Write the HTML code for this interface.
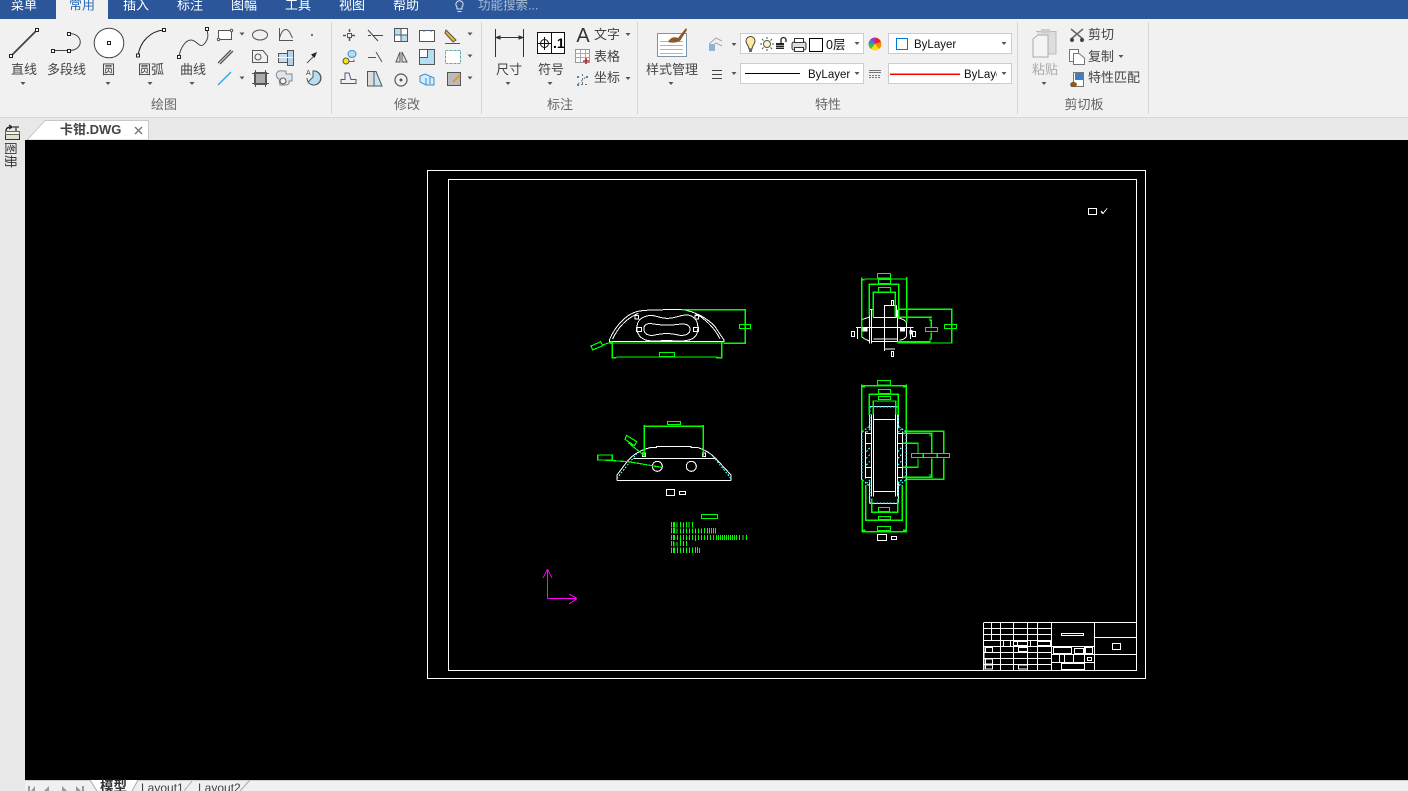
<!DOCTYPE html>
<html><head><meta charset="utf-8"><style>
html,body{margin:0;padding:0;width:1408px;height:791px;overflow:hidden;background:#000}
svg{display:block}
text{font-family:"Liberation Sans","Noto Sans CJK SC",sans-serif;font-size:13px;fill:#444}
.m{text-anchor:middle}
.t{fill:#fff}
.g{fill:#666}
.b{font-size:11.5px;fill:#111}
.i{fill:none;stroke:#555;stroke-width:1}
.w{fill:none;stroke:#fff;stroke-width:3}
.n{fill:none;stroke:#0f0;stroke-width:3.6}
.c{fill:none;stroke:#3ff;stroke-width:3.6;stroke-dasharray:5 5}
</style></head><body>
<svg width="1408" height="791" viewBox="0 0 1408 791" xmlns="http://www.w3.org/2000/svg">
<defs>
<path id="d" d="M-2.500 0h5l-2.500 3z" fill="#555"/>
</defs>
<rect width="1408" height="791" fill="#000"/>
<!-- top -->
<rect width="1408" height="19" fill="#2b579a"/>
<rect y="19" width="1408" height="98" fill="#f1f1f1"/>
<rect y="117" width="1408" height="1" fill="#d8d8d8"/>
<rect x="56" width="52" height="20" fill="#f1f1f1"/>
<text class="m t" x="24" y="9.500">菜单</text>
<text class="m" x="82" y="9.500" style="fill:#2b6cb5">常用</text>
<text class="m t" x="136" y="9.500">插入</text>
<text class="m t" x="190" y="9.500">标注</text>
<text class="m t" x="244" y="9.500">图幅</text>
<text class="m t" x="298" y="9.500">工具</text>
<text class="m t" x="352" y="9.500">视图</text>
<text class="m t" x="406" y="9.500">帮助</text>
<path d="M457 7a3.600 3.600 0 1 1 5 0v2h-5zM457.500 11.500h4" fill="none" stroke="#dbe3ef"/>
<text x="478" y="9.500" style="fill:#a9bbd6;font-size:12.500px">功能搜索...</text>
<!-- separators -->
<g fill="#d6d6d6"><rect x="331" y="22" width="1" height="92"/><rect x="481" y="22" width="1" height="92"/><rect x="637" y="22" width="1" height="92"/><rect x="1017" y="22" width="1" height="92"/><rect x="1148" y="22" width="1" height="92"/></g>
<!-- draw group -->
<g fill="#fff" stroke="#222">
<path d="M11 56 37 30" stroke="#444" stroke-width="1.800"/>
<rect x="9.500" y="54.500" width="3" height="3"/><rect x="35.500" y="28.500" width="3" height="3"/>
<path d="M53 50.500H69M69 33.500c15 0 15 17 0 17" fill="none" stroke="#444"/>
<rect x="51.500" y="49.500" width="3" height="3"/><rect x="67.500" y="49.500" width="3" height="3"/><rect x="67.500" y="32.500" width="3" height="3"/>
<circle cx="109" cy="43" r="14.800" stroke="#444" stroke-width="1"/><rect x="107.500" y="41.500" width="3" height="3"/>
<path d="M138 56C140 41 151 31 164 30" fill="none"/>
<rect x="136.500" y="54" width="3" height="3"/><rect x="162.500" y="28.500" width="3" height="3"/>
<path d="M179 57c1-8 6-17 12-17s9 10 14 3 2-10 2-14" fill="none" stroke="#444"/>
<rect x="177.500" y="55.500" width="3" height="3"/><rect x="205.500" y="27.500" width="3" height="3"/>
</g>
<g font-size="13">
<text class="m" x="24" y="74">直线</text><text class="m" x="66.500" y="74">多段线</text><text class="m" x="108.500" y="74">圆</text><text class="m" x="151" y="74">圆弧</text><text class="m" x="193" y="74">曲线</text>
</g>
<use href="#d" x="23" y="82"/><use href="#d" x="108" y="82"/><use href="#d" x="150" y="82"/><use href="#d" x="192" y="82"/>
<use href="#d" x="242" y="32.500"/><use href="#d" x="242" y="76.500"/>
<g class="i">
<rect x="218.500" y="30.500" width="13" height="9" fill="#fff"/>
<circle cx="218.500" cy="39.500" r="1.200" fill="#fff"/><circle cx="231.500" cy="30.500" r="1.200" fill="#fff"/>
<ellipse cx="260" cy="35" rx="7.500" ry="5"/>
<path d="M279.500 28V40.500H293M279.500 38c3-10 7-10 10-6l3 6"/>
<path d="M218 63 231 50M220 64 233 51" stroke-width="1.300"/>
<path d="M252.500 50.500H263L267.500 56V62.500H252.500z"/><circle cx="258" cy="57" r="3"/>
<rect x="278.500" y="53.500" width="15" height="9" fill="#c9dcf0"/><rect x="287.500" y="50.500" width="6" height="15" fill="#b9d2ea"/><path d="M278 57.500H293" stroke="#fff"/>
<path d="M218 85 231 72" stroke="#2aa5e8" stroke-width="1.300"/>
<rect x="254.500" y="72.500" width="12" height="12" fill="#aaa"/><path d="M252 73.500H269M252 83.500H269M255.500 70V87M265.500 70V87"/>
<path d="M279 79a3 3 0 0 1 3-8h4v3h6v7h-3a3 3 0 0 1-3 4h-6z" fill="#dfe4ec" stroke="#888"/><circle cx="283" cy="81" r="3" fill="#f1f1f1"/>
<path d="M307 78a7 7 0 1 0 7-7" /><path d="M313 71a7 7 0 1 1-5 11l5-5z" fill="#b7ddf5"/>
</g>
<circle cx="312" cy="35" r="1" fill="#444"/>
<path d="M307 63 314 56" stroke="#555"/><path d="M317 52 311 54.500 314.500 58z" fill="#222"/>
<text x="306" y="75" style="font-size:7px">A</text>
<text class="m g" x="164" y="109" style="font-size:13px">绘图</text>
<!-- modify -->
<g class="i">
<path d="M343 35.500h3M352 35.500h3M349.500 29v3M349.500 38v3" stroke-width="1.500"/><rect x="347.500" y="33.500" width="4" height="4"/>
<path d="M368 30 378 41M373 35.500H383M368 35.500h3" stroke="#445"/>
<rect x="394.500" y="28.500" width="13" height="13" fill="#b7ddf5"/><rect x="394.500" y="35" width="6.500" height="6.500" fill="#fff"/><rect x="401" y="28.500" width="6.500" height="6.500" fill="#fff"/><path d="M401 28V42M394 35H408" />
<rect x="419.500" y="30.500" width="15" height="11" fill="#fff"/><path d="M424 30v2M431 30v2" stroke="#2a7de1"/>
<path d="M446 30 456 40 453 42 445 33z" fill="#f0b429"/><path d="M445 43.500H460"/>
<circle cx="346" cy="61" r="3" fill="#ffe600"/><ellipse cx="352" cy="54" rx="4" ry="3.500" fill="#b7ddf5" stroke="#3a8ed0"/><path d="M349 61.500h5v-2" stroke="#b44"/>
<path d="M368 57.500H376M376 52 382 62"/>
<path d="M400 52V62H396zM402 52V62H407z" fill="#e0e0e0"/>
<rect x="419.500" y="49.500" width="15" height="15" fill="#b7ddf5"/><rect x="419.500" y="49.500" width="8" height="8" fill="#fff"/>
<rect x="445.500" y="50.500" width="15" height="13" fill="#fff" stroke-dasharray="3 1" stroke="#6aa"/>
<path d="M341 83.500H356V79.500H351L349 73H345V79.500H341z" stroke="#557"/>
<path d="M372 71.500H376L382 86H372z" fill="#c7e4f7"/><path d="M367.500 71.500H374V86H367.500z" fill="#ddd"/>
<circle cx="401" cy="80" r="6" stroke-width="1.200"/><circle cx="401" cy="80" r="1" fill="#444"/>
<path d="M420 76 425 74 434 78V85H426L420 82zM426 78V85M430 77V84" stroke="#3a8ed0" fill="#d5ecfa"/>
<rect x="447.500" y="72.500" width="13" height="13" fill="#bbb"/><path d="M453 82 460 75" stroke="#e89c1a" stroke-width="2"/>
</g>
<use href="#d" x="470" y="32.500"/><use href="#d" x="470" y="54.500"/><use href="#d" x="470" y="76.500"/>
<text class="m g" x="407" y="109">修改</text>
<!-- annot -->
<g class="i" style="stroke:#333">
<path d="M495.500 29V57M523.500 29V57M495 37.500H523"/>
<path d="M496 37.500l4-1.500v3zM523 37.500l-4-1.500v3z" fill="#333"/>
</g>
<text class="m" x="509" y="74">尺寸</text><use href="#d" x="508" y="82"/>
<rect x="537.500" y="32.500" width="27" height="21" fill="#fff" stroke="#111"/><path d="M551.500 32V54" stroke="#111"/>
<circle cx="544.500" cy="43.500" r="4" fill="none" stroke="#111"/><path d="M538 43.500H551M544.500 37V50" stroke="#111"/>
<text x="553" y="48" style="font-size:14px;font-weight:bold;fill:#000">.1</text>
<text class="m" x="551" y="74">符号</text><use href="#d" x="550" y="82"/>
<text class="m" x="583" y="42" style="font-size:20px;fill:#333">A</text>
<text x="594" y="39">文字</text><use href="#d" x="628" y="33"/>
<rect x="575.500" y="49.500" width="14" height="13" fill="#fff" stroke="#999"/><path d="M575 53.500H590M575 57.500H590M580.500 50V62M585.500 50V62" stroke="#aaa"/><path d="M586 58V64M583 61H589" stroke="#c22" stroke-width="1.600"/>
<text x="594" y="61">表格</text>
<g stroke="#777" fill="none"><path d="M577 84.500H589M582.500 74V86M578 84 587 76" stroke-dasharray="2 2"/></g>
<rect x="577" y="76" width="2" height="2" fill="#3a8ed0"/><rect x="586" y="76" width="2" height="2" fill="#3a8ed0"/><rect x="577" y="84" width="2" height="2" fill="#3a8ed0"/>
<text x="594" y="82">坐标</text><use href="#d" x="628" y="77"/>
<text class="m g" x="560" y="109">标注</text>
<!-- style -->
<rect x="657.500" y="33.500" width="29" height="23" fill="#fff" stroke="#7b93ad"/>
<path d="M660 41.500H683M660 45.500H683M660 49.500H683M660 53.500H683" stroke="#a9b6c6"/>
<path d="M668 42C671 36 676 37 678 38L686 28 687 30 680 41C676 43 672 43 668 42z" fill="#8a5a2b"/>
<text class="m" x="672" y="74">样式管理</text><use href="#d" x="671" y="82"/>
<!-- layers -->
<path d="M709 44 716 38 722 41M709 48 716 43 722 46" fill="none" stroke="#aaa"/><rect x="709" y="44" width="6" height="7" fill="#8fb2d8"/>
<use href="#d" x="734" y="43"/>
<rect x="740.500" y="33.500" width="123" height="20" fill="#fff" stroke="#ccc"/>
<path d="M749 49c0-3-3-5-3-8a4.500 4.500 0 0 1 9 0c0 3-3 5-3 8z" fill="#ffe9a0" stroke="#444"/><rect x="749" y="49" width="3" height="3" fill="#666"/>
<circle cx="767" cy="44" r="3.500" fill="#fff3d0" stroke="#555"/><path d="M767 37v2M767 49v2M760 44h2M772 44h2M762 39l1.500 1.500M770.500 47.500l1.500 1.500M772 39l-1.500 1.500M763.500 47.500 762 49" stroke="#555"/>
<rect x="776" y="43" width="8" height="6" fill="#222"/><path d="M776 45.500h8M776 47.500h8" stroke="#c9a227"/><path d="M781 43v-3a2.500 2.500 0 0 1 5 0v2" fill="none" stroke="#222" stroke-width="1.300"/>
<rect x="792" y="42" width="14" height="8" rx="2" fill="#ddd" stroke="#333"/><rect x="794.500" y="38.500" width="9" height="4" fill="#fff" stroke="#333"/><rect x="794.500" y="47.500" width="9" height="4" fill="#fff" stroke="#333"/>
<rect x="809.500" y="38.500" width="13" height="13" fill="#fff" stroke="#000"/>
<text x="826" y="49" style="fill:#111;font-size:12.500px">0层</text>
<use href="#d" x="857" y="42"/>
<circle cx="875" cy="44" r="6.500" fill="#ddd"/>
<path d="M875 44V37.500A6.500 6.500 0 0 1 881 42z" fill="#e22"/><path d="M875 44 881 42A6.500 6.500 0 0 1 879 49z" fill="#f80"/><path d="M875 44 879 49A6.500 6.500 0 0 1 871 49z" fill="#fd0"/><path d="M875 44 871 49A6.500 6.500 0 0 1 868.500 44z" fill="#4b4"/><path d="M875 44H868.500A6.500 6.500 0 0 1 870 40z" fill="#38d"/><path d="M875 44 870 40A6.500 6.500 0 0 1 875 37.500z" fill="#a3c"/>
<rect x="888.500" y="33.500" width="123" height="20" fill="#fff" stroke="#ccc"/>
<rect x="896.500" y="38.500" width="11" height="11" fill="#fff" stroke="#0078d7"/>
<text class="b" x="914" y="48">ByLayer</text><use href="#d" x="1004" y="42"/>
<path d="M712 70.500H722M712 74.500H722M712 78.500H722" stroke="#444"/>
<use href="#d" x="734" y="72"/>
<rect x="740.500" y="63.500" width="123" height="20" fill="#fff" stroke="#ccc"/>
<rect x="745" y="73" width="55" height="1" fill="#000"/>
<text class="b" x="808" y="78">ByLayer</text><use href="#d" x="857" y="72"/>
<path d="M869 70.500H881M869 72.500H881" stroke="#777"/><path d="M869 75.500H881M869 77.500H881" stroke="#777" stroke-dasharray="2 1"/>
<rect x="888.500" y="63.500" width="123" height="20" fill="#fff" stroke="#ccc"/>
<rect x="890" y="73.500" width="70" height="1.500" fill="#f00"/>
<svg x="960" y="63" width="37" height="20"><text class="b" x="4" y="15">ByLayer</text></svg>
<use href="#d" x="1004" y="72"/>
<text class="m g" x="828" y="109">特性</text>
<!-- clipboard -->
<path d="M1036 31.500H1056V54H1048" fill="#ddd" stroke="#bbb"/><rect x="1041" y="29" width="9" height="4" fill="#ccc"/>
<path d="M1033 39 1038 35H1048V57H1033z" fill="#f4f4f4" stroke="#aaa"/>
<text class="m" x="1045" y="74" style="fill:#aaa">粘贴</text><use href="#d" x="1044" y="82"/>
<path d="M1071 29 1083 39M1083 29 1071 39" stroke="#666" stroke-width="1.500"/><circle cx="1072" cy="40" r="2" fill="#444"/><circle cx="1082" cy="40" r="2" fill="#444"/>
<text x="1088" y="39">剪切</text>
<rect x="1069.500" y="49.500" width="9" height="12" fill="#fff" stroke="#777"/><path d="M1073.500 53.500H1079L1084.500 58V64.500H1073.500z" fill="#fff" stroke="#777"/>
<text x="1088" y="61">复制</text><use href="#d" x="1121" y="55"/>
<rect x="1073.500" y="72.500" width="10" height="14" fill="#fff" stroke="#777"/><rect x="1075" y="73" width="8" height="7" fill="#3f7cc4"/><path d="M1070 84c2-3 5-3 7 0l-1 3h-5z" fill="#8a5a2b"/>
<text x="1088" y="82">特性匹配</text>
<text class="m g" x="1084" y="109">剪切板</text>
<!-- tabs -->
<rect y="118" width="1408" height="22" fill="#e9e9e9"/>
<rect y="118" width="25" height="673" fill="#e8e8e8"/>
<path d="M27 140 45 120.500H148.500V140z" fill="#fff" stroke="#c8c8c8"/>
<text x="60" y="134" style="font-size:13px;font-weight:bold;fill:#444">卡钳.DWG</text>
<path d="M135 127 142 134M142 127 135 134" stroke="#777" stroke-width="1.400"/>
<rect x="5.500" y="134.500" width="14" height="5" fill="#dfe0d0" stroke="#333"/><rect x="5.500" y="131.500" width="14" height="3" fill="#f5f5e0" stroke="#666"/><path d="M6 131c0-3 2-4 5-4M9 125l3 2-3 2" fill="none" stroke="#222" stroke-width="1.300"/><path d="M13 127h6M16 127v4" stroke="#555" stroke-width="1.500"/>
<text transform="translate(6 142) rotate(90)" style="font-size:13px;fill:#333">图册</text>
<!-- canvas -->
<rect x="25" y="140" width="1383" height="640" fill="#000"/>
<g shape-rendering="crispEdges">
<g fill="none" stroke="#fff">
<rect x="427.500" y="170.500" width="718" height="508"/>
<rect x="448.500" y="179.500" width="688" height="491"/>
<rect x="1088.500" y="208.500" width="8" height="6"/>
<path d="M1101 211l2 2.500 4-5M1101 213l2-1" />
<!-- title block -->
<path d="M983.500 622.500V670M1051.500 622V670M1094.500 622V670M1095 637.500H1136M1095 654.500H1136M984 628.500H1051M984 634.500H1051M984 640.500H1051M984 646.500H1051M984 652.500H1051M984 658.500H1051M984 664.500H1051M984 622.500H1136"/>
<path d="M991.500 622V640M1000.500 622V670M1013.500 622V670M1027.500 622V670M1037.500 622V670M1003.500 640V646M1010.500 640V646M1017.500 640V646M1030.500 640V646M984 646V670"/>
<path d="M1052 646.500H1094M1052 654.500H1094M1052 662.500H1094M1059.500 654V662M1064.500 654V662M1073.500 654V662M1084.500 646V670M1071.500 646V654"/>
<rect x="1061.500" y="633.500" width="22" height="2"/>
<rect x="1112.500" y="643.500" width="8" height="6"/>
<rect x="1053.500" y="647.500" width="18" height="6"/><rect x="1074.500" y="648.500" width="9" height="5"/><rect x="1085.500" y="647.500" width="7" height="6"/><rect x="1087.500" y="657.500" width="4" height="3"/><rect x="1061.500" y="663.500" width="23" height="6"/>
<rect x="1013.500" y="641.500" width="14" height="4"/><rect x="1037.500" y="641.500" width="13" height="4"/><rect x="1018.500" y="647.500" width="9" height="4"/><rect x="985.500" y="647.500" width="7" height="5"/><rect x="985.500" y="659" width="7" height="5"/><rect x="985.500" y="665" width="7" height="4"/><rect x="1018.500" y="665" width="9" height="4"/>
</g>
<!-- UCS -->
<g fill="none" stroke="#f0f" transform="translate(530 560)">
<path d="M17.500 9V38.500H47M17.500 9 13 18M17.500 9 22 18M47 38.500 39 34M47 38.500 39 44"/>
</g>
<!-- view 1 -->
<g transform="translate(580 295) scale(.33333)">
<path class="w" d="M88 135C105 95 135 60 170 50 190 45 215 44 305 44 345 48 385 72 405 95L432 135V141M88 135V141M88 144H432M88 139H432"/>
<path class="w" d="M98 132C115 95 140 70 175 55M420 132C405 100 375 70 345 56"/>
<path class="w" d="M172 110C168 85 175 68 205 62 225 58 235 70 262 70 290 70 300 58 325 60 350 66 357 85 352 112 348 130 330 138 300 138H220C195 138 178 130 172 110z"/>
<path class="w" d="M192 105C190 90 200 84 215 86 235 90 270 92 295 88 315 84 332 90 330 105 328 118 315 122 300 121 270 114 250 114 220 121 205 122 194 118 192 105z"/>
<path class="w" d="M170 98H185V110H170zM340 98H355V110H340zM165 62H175V72H165zM345 62H356V72H345zM243 136H278"/>
<path class="n" d="M305 44H496V145H432M97 140V188H110M110 186H410V188H425V140M98 144H432"/>
<rect class="n" x="478.500" y="88.500" width="33" height="12"/>
<rect class="n" x="238.500" y="172.500" width="45" height="12"/>
<path class="n" d="M97 140 68 150M33 153 62 140 68 152 38 165z"/>
</g>
<!-- view 2 -->
<g transform="translate(840 265) scale(.33333)">
<path class="w" d="M133 120V258M133 122H170M170 122V158M100 157H170M95 133V236M88 140V236M172 135V230M90 133H100V157M100 222H172M95 230H172M133 252H165"/>
<path class="w" d="M65 165C72 160 80 160 88 156M65 215C72 222 80 224 88 228M178 160C190 162 198 168 200 175M178 226C190 224 198 220 200 212M65 165V215M200 172V215"/>
<path class="w" d="M48 187H220M53 187V222M212 187V222"/>
<path d="M68 188H83V200H68zM180 188H195V200H180z" fill="#fff"/>
<rect class="w" x="34" y="199" width="10" height="16"/><rect class="w" x="217" y="199" width="10" height="16"/>
<rect class="w" x="154" y="106" width="7" height="16"/><rect class="w" x="154" y="259" width="7" height="16"/>
<path d="M208 195H218V208H208z" fill="#fff"/>
<path class="n" d="M65 38V216M73 42H190M65 44H74M190 42H200M200 36V172M88 56V152M88 58H176V160M100 80V156M100 82H166V156"/>
<rect class="n" x="112.500" y="25.500" width="39" height="14"/>
<rect class="n" x="115.500" y="42.500" width="36" height="14"/>
<rect class="n" x="115.500" y="67.500" width="36" height="14"/>
<path class="n" d="M172 133H335V234H172M172 157H276M270 157V166H274V187M274 202V222H270V230H172"/>
<rect class="n" x="256.500" y="187.500" width="36" height="12"/>
<rect class="n" x="313.500" y="178.500" width="36" height="12"/>
</g>
<!-- view 3 -->
<g transform="translate(585 410) scale(.33333)">
<path class="w" d="M96 211H438M96 211V195L130 150C150 128 175 118 195 113 H215V109H318V113H340C360 120 378 130 392 145L438 195V211M145 145H390"/>
<circle class="w" cx="217" cy="169" r="15"/><circle class="w" cx="319" cy="169" r="15"/>
<rect class="w" x="172" y="129" width="10" height="10"/><rect class="w" x="352" y="129" width="10" height="10"/>
<path class="c" d="M96 205 156 130M438 205 378 132"/>
<rect class="w" x="244.500" y="238.500" width="24" height="18"/><rect class="w" x="283.500" y="244.500" width="18" height="9"/>
<path class="n" d="M178 45V140M355 45V140M178 49H355"/>
<rect class="n" x="247.500" y="34.500" width="39" height="9"/>
<path class="n" d="M54 150 130 155 230 172M130 98 175 135"/>
<path class="n" d="M38 135H82V150H38zM120 88 125 76 155 95 148 107z"/>
<rect class="n" x="349.500" y="313.500" width="48" height="12"/>
<g stroke="#0f0" stroke-width="3" fill="none">
<path d="M260 336v16M266 336v16M268 336v16M276 338v14M286 336v16M296 338v14M305 336v16M312 336v16M322 336v16"/>
<path d="M260 354v16M266 354v16M268 354v16M276 356v14M286 356v14M296 356v14M305 356v14M313 356v14M323 356v14M331 356v14M340 356v14M349 356v14M358 354v16M367 354v16M373 354v16M379 354v16M385 354v16M391 354v16"/>
<path d="M260 375v15M266 375v15M268 375v15M277 375v15M286 375v18M296 375v15M305 375v15M314 375v15M323 375v15M331 375v18M340 375v15M349 375v15M358 375v15M367 375v15M376 375v15M385 375v15M394 375v15M400 375v15M406 375v15M412 375v15M418 375v15M424 375v15M430 375v15M436 375v15M442 375v15M448 375v15M454 375v15M464 375v15M474 375v15M484 375v15"/>
<path d="M260 393v15M265 393v15M267 396v14M276 396v14M286 393v15M295 393v15M304 393v15"/>
<path d="M260 413v16M265 413v16M268 413v16M277 413v16M286 413v16M295 413v16M304 413v16M313 413v16M323 413v16M331 411v18M337 411v18M343 414v15"/>
</g>
</g>
<!-- view 4 -->
<g transform="translate(845 375) scale(.33333)">
<path class="w" d="M85 103V365M152 118V365M158 118V365M80 118V365M86 133H152M86 349H152M62 170V310M62 175H80M62 205H80M62 278H80M62 307H80M172 170V310M158 175H172M158 205H172M158 278H172M158 307H172"/>
<path class="w" d="M74 95H160M74 95V160M160 95V160M74 385H160M74 385V320M160 385V320M50 170V315M184 170V315" />
<path class="c" d="M74 95H160M74 95V160M160 95V160M74 385H160M74 385V320M160 385V320M50 170V315M184 170V315M52 170 72 155M182 170 162 155M52 315 72 332M182 315 162 332"/>
<path class="c" d="M64 270 78 255M64 250 78 235M64 230 78 215M159 270 172 255M159 250 172 235M159 230 172 215M64 172 78 160M159 172 172 160M64 325 78 312M159 325 172 312"/>
<rect class="w" x="97.500" y="478.500" width="27" height="18"/><rect class="w" x="139.500" y="484.500" width="15" height="9"/>
<path class="n" d="M50 28V170M184 28V170M50 32H184M50 36H60M174 36H184M73 55V120M160 55V120M73 58H160M85 76V118M152 76V118M85 78H152"/>
<path class="n" d="M52 315V472M184 315V472M52 470H184M52 466H62M174 466H184M62 330V438M172 330V438M62 436H172M72 436H62M80 370V414M158 370V414M80 412H158"/>
<rect class="n" x="97.500" y="16.500" width="39" height="14"/><rect class="n" x="100.500" y="43.500" width="36" height="12"/><rect class="n" x="100.500" y="64.500" width="36" height="9"/>
<rect class="n" x="100.500" y="397.500" width="33" height="12"/><rect class="n" x="100.500" y="424.500" width="36" height="9"/><rect class="n" x="97.500" y="454.500" width="39" height="12"/>
<path class="n" d="M184 169H296V235M296 250V313H184M172 175H260V235M260 250V307H172M172 205H219V235M219 250V277H172M255 176V185M255 297V306"/>
<rect class="n" x="199.500" y="235.500" width="114" height="12"/>
<path class="n" d="M235 235V248M277 235V248"/>
</g>
</g>
<!-- bottom -->
<rect x="25" y="780" width="1383" height="11" fill="#f0f0f0"/>
<path d="M25 780.500H1408" stroke="#d0d0d0"/>
<path d="M90 780 97 791H132L138 780z" fill="#fff"/>
<path d="M90 780 97 791M132 791 138 780M184 791 192 781M240 791 250 780" stroke="#aaa" fill="none"/>
<g fill="#999"><path d="M28 791V786H30V791zM35 786 31 791H35zM49 786 44 791H49zM62 786 67 791H62zM76 786 81 791H76zM82 786H84V791H82z"/></g>
<text x="100" y="791" style="font-weight:bold;font-size:13.500px;fill:#333">模型</text>
<text x="141" y="792" style="font-size:12px;fill:#444">Layout1</text>
<text x="198" y="792" style="font-size:12px;fill:#444">Layout2</text>
</svg>
</body></html>
